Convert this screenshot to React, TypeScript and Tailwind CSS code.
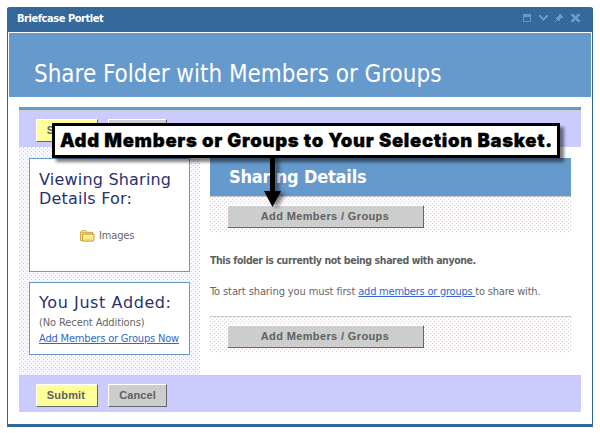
import React from "react";

const tahoma = "font-['DejaVu_Sans_Condensed','DejaVu_Sans',sans-serif] [font-stretch:condensed]";
const sideHeading = "font-['DejaVu_Sans',sans-serif] text-[16px] [font-stretch:normal] text-[#28326f]";
const dotSize = "bg-[length:4px_4px] bg-[position:0_0,2px_2px]";
const lavenderDots =
  "bg-[#f8f6ff] bg-[conic-gradient(from_270deg_at_1px_1px,#c4c4ff_90deg,transparent_90deg),conic-gradient(from_270deg_at_1px_1px,#d4ccff_90deg,transparent_90deg)]";
const greyDots =
  "bg-[#fdfbfc] bg-[conic-gradient(from_270deg_at_1px_1px,#cccccc_90deg,transparent_90deg),conic-gradient(from_270deg_at_1px_1px,#dcd0e0_90deg,transparent_90deg)]";
const barDots =
  "bg-[#ccccff] bg-[conic-gradient(from_270deg_at_1px_1px,#cccccc_90deg,transparent_90deg),conic-gradient(from_270deg_at_1px_1px,#cccccc_90deg,transparent_90deg)]";
const titleDots =
  "bg-[#336699] bg-[conic-gradient(from_270deg_at_1px_1px,#666699_90deg,transparent_90deg),conic-gradient(from_270deg_at_1px_1px,#666699_90deg,transparent_90deg)]";
const buttonDots =
  "bg-[#cccccc] bg-[conic-gradient(from_270deg_at_1px_1px,#ddd2dd_90deg,transparent_90deg),conic-gradient(from_270deg_at_1px_1px,#c8dcc8_90deg,transparent_90deg)]";

function Button({ label, className }: { label: string; className: string }) {
  return (
    <button
      className={`h-[23px] shrink-0 whitespace-nowrap border border-t-white border-l-white border-b-[#666] border-r-[#666] pb-px text-center font-['Liberation_Sans',Arial,sans-serif] text-[11px] leading-[20px] font-bold text-[#606060] ${className}`}
    >
      {label}
    </button>
  );
}

function AddBar() {
  return (
    <div className={`flex h-[37px] border-t border-[#ccc] pt-[8px] pl-[17px] ${greyDots} ${dotSize}`}>
      <Button label="Add Members / Groups" className={`w-[197px] pr-px tracking-[0.37px] ${buttonDots} ${dotSize}`} />
    </div>
  );
}

function Actions() {
  return (
    <div className={`flex h-[37px] gap-[10px] border-t border-[#ccc] pt-[8px] pl-[17px] ${barDots} ${dotSize}`}>
      <Button label="Submit" className="w-[62px] bg-[#ffff99] pr-[2px] tracking-[0.2px]" />
      <Button label="Cancel" className={`w-[59px] tracking-[0.1px] ${buttonDots} ${dotSize}`} />
    </div>
  );
}

function Folder() {
  return (
    <svg width="15" height="12" viewBox="0 0 16 13">
      <path d="M.5 11V2.500L2 .5h3.500l1.500 2h6.500v2" fill="#ffe99a" stroke="#cca23c" />
      <path d="M.5 11.500V3h13v8.500z" fill="#fff0a8" stroke="#cca23c" />
      <path d="M2.500 4.500h12.500v6l-1 1.500H2.500z" fill="#ffe98a" stroke="#c0942c" />
      <path d="M3.500 6h10" stroke="#fff8c8" />
      <path d="M4 10.500h9" stroke="#f6c95c" />
    </svg>
  );
}

function WindowIcons() {
  return (
    <svg width="58" height="10" viewBox="0 0 58 10" fill="#6699cc" shapeRendering="crispEdges">
      <path fillRule="evenodd" d="M0 1h8v8H0zM1 4v4h6V4z" />
      <path d="M16 2h2v1h1v1h1v1h1V4h1V3h1V2h2v2h-1v1h-1v1h-1v1h-1v1h-1V7h-1V6h-1V5h-1V4h-1z" />
      <path d="M36 1h2v1h1v1h1v2h-2v1h-1v2h-2V7h-1v1h-1v1h-1V8h1V7h1V6h-1V4h2V3h1z" />
      <path d="M48 1h3v1h1v1h1V2h1V1h3v2h-1v1h-1v2h1v1h1v2h-3V8h-1V7h-1v1h-1v1h-3V7h1V6h1V4h-1V3h-1z" />
    </svg>
  );
}

export default function App() {
  return (
    <div className={`relative h-[433px] w-[600px] overflow-hidden bg-white pt-[7px] pl-[7px] ${tahoma}`}>
      <div className="h-[420px] w-[586px] rounded-t-[3px] border-x border-b-[3px] border-[#336699] bg-white">
        <div className={`-mx-px flex h-[25px] items-center justify-between rounded-t-[3px] pr-[12px] pl-[10px] ${titleDots} ${dotSize}`}>
          <span className="pb-[1px] text-[11px] leading-[14px] font-bold tracking-[-0.45px] text-white">Briefcase Portlet</span>
          <div className="pb-[3px]"><WindowIcons /></div>
        </div>
        <div className="mx-px mt-px h-[64px] bg-[#6699cc] pt-[25px] pl-[25px]">
          <h1 className="text-[24px] leading-[32px] tracking-[-0.02px] whitespace-nowrap text-white">Share Folder with Members or Groups</h1>
        </div>
        <div className="mt-[10px] ml-[11px] w-[562px]">
          <div className="h-[3px] bg-[#6699cc]" />
          <Actions />
          <div className="flex h-[228px]">
            <aside className={`w-[181px] shrink-0 px-[10px] pt-[11px] ${lavenderDots} ${dotSize}`}>
              <section className="h-[114px] w-[161px] border border-[#6699cc] bg-white pt-[11px] pl-[9px]">
                <h2 className={`leading-[19px] tracking-[0.2px] ${sideHeading}`}>Viewing Sharing<br />Details For:</h2>
                <div className="mt-[20px] flex items-center gap-[4px] pl-[41px] text-[11px] leading-[14px] tracking-[-0.15px] text-[#666]">
                  <Folder />
                  <span className="pt-[1px]">Images</span>
                </div>
              </section>
              <section className="mt-[10px] h-[73px] w-[161px] border border-[#6699cc] bg-white pt-[10px] pl-[9px] whitespace-nowrap">
                <h2 className={`leading-[20px] tracking-[0.6px] ${sideHeading}`}>You Just Added:</h2>
                <p className="mt-[2px] text-[11px] leading-[15px] tracking-[-0.1px] text-[#666]">(No Recent Additions)</p>
                <a className="block text-[11px] leading-[17px] tracking-[-0.18px] text-[#3366cc] underline">Add Members or Groups Now</a>
              </section>
            </aside>
            <main className="ml-[10px] w-[361px] pt-[11px]">
              <h2 className="h-[38px] bg-[#6699cc] pl-[19px] text-[18px] leading-[38px] font-bold tracking-[-0.18px] text-white">Sharing Details</h2>
              <AddBar />
              <p className="mt-[19px] text-[10.5px] leading-[16px] font-bold tracking-[-0.4px] whitespace-nowrap text-[#606060]">This folder is currently not being shared with anyone.</p>
              <p className="mt-[16px] text-[11px] leading-[16px] tracking-[-0.1px] whitespace-nowrap text-[#666]">To start sharing you must first <a className="tracking-[-0.23px] text-[#3366cc] underline">add members or groups </a><span className="tracking-[-0.2px]">to share with.</span></p>
              <div className="mt-[16px]"><AddBar /></div>
            </main>
          </div>
          <Actions />
        </div>
      </div>
      <div className="absolute top-[123px] left-[52px] h-[35px] w-[508px] border-[3px] border-black bg-white pl-[5px] font-['Inter','Liberation_Sans',sans-serif] text-[18.5px] leading-[28px] font-black tracking-[0.7px] [font-stretch:normal] whitespace-nowrap text-black shadow-[4px_4px_3px_rgba(0,0,0,0.5)] [-webkit-text-stroke:0.3px_black]">
        Add Members or Groups to Your Selection Basket.
      </div>
      <svg className="absolute top-[157px] left-[262px] drop-shadow-[4px_2px_2px_rgba(0,0,0,0.5)]" width="22" height="50" viewBox="0 0 22 50">
        <path d="M8 0h5v34h6l-8.500 16L2 34h6z" />
      </svg>
    </div>
  );
}
